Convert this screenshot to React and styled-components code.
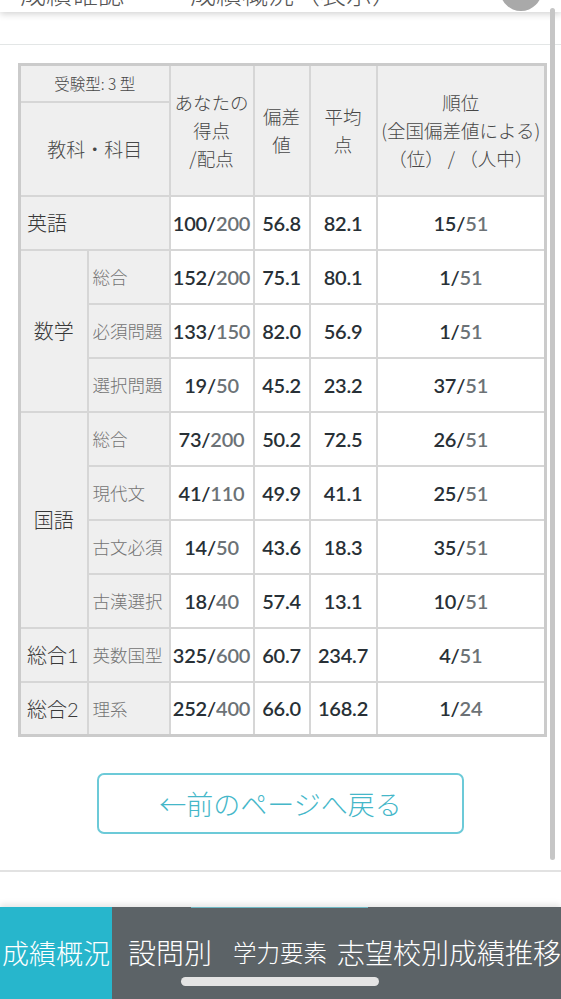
import React from "react";
import styled, { createGlobalStyle } from "styled-components";

const GlobalStyle = createGlobalStyle`
    html, body {
        margin: 0;
        padding: 0;
        background: #ffffff;
    }
    body {
        font-family: "Lato", "Noto Sans CJK JP", sans-serif;
        color: #333;
    }
    * {
        box-sizing: border-box;
    }
`;

const subjects = [
    { label: "英語", rows: [{ sub: null, score: 100, full: 200, dev: "56.8", avg: "82.1", rank: 15, total: 51 }] },
    {
        label: "数学",
        center: true,
        rows: [
            { sub: "総合", score: 152, full: 200, dev: "75.1", avg: "80.1", rank: 1, total: 51 },
            { sub: "必須問題", score: 133, full: 150, dev: "82.0", avg: "56.9", rank: 1, total: 51 },
            { sub: "選択問題", score: 19, full: 50, dev: "45.2", avg: "23.2", rank: 37, total: 51 },
        ],
    },
    {
        label: "国語",
        center: true,
        rows: [
            { sub: "総合", score: 73, full: 200, dev: "50.2", avg: "72.5", rank: 26, total: 51 },
            { sub: "現代文", score: 41, full: 110, dev: "49.9", avg: "41.1", rank: 25, total: 51 },
            { sub: "古文必須", score: 14, full: 50, dev: "43.6", avg: "18.3", rank: 35, total: 51 },
            { sub: "古漢選択", score: 18, full: 40, dev: "57.4", avg: "13.1", rank: 10, total: 51 },
        ],
    },
    { label: "総合1", rows: [{ sub: "英数国型", score: 325, full: 600, dev: "60.7", avg: "234.7", rank: 4, total: 51 }] },
    { label: "総合2", rows: [{ sub: "理系", score: 252, full: 400, dev: "66.0", avg: "168.2", rank: 1, total: 24 }] },
];

const tabs = [
    { label: "成績概況", w: 112, pad: 2, size: 27, active: true },
    { label: "設問別", w: 116, pad: 16, size: 28 },
    { label: "学力要素", w: 105, pad: 5, size: 23.5 },
    { label: "志望校別成績推移", w: 240, pad: 4, size: 28 },
];

const Fraction = ({ top, bottom }) => (
    <>
        {top}/<Denom>{bottom}</Denom>
    </>
);

const App = () => {
    return (
        <Page>
            <GlobalStyle />
            <TitleBar>
                成績確認　−　成績概況（表示）
                <InfoCircle />
            </TitleBar>
            <Content>
                <Divider />
                <TableWrap>
                    <Table>
                        <colgroup>
                            <col style={{ width: 68 }} />
                            <col style={{ width: 82 }} />
                            <col style={{ width: 84 }} />
                            <col style={{ width: 56 }} />
                            <col style={{ width: 67 }} />
                            <col style={{ width: 169 }} />
                        </colgroup>
                        <thead>
                            <tr style={{ height: 37 }}>
                                <Head colSpan={2} small>
                                    受験型: 3 型
                                </Head>
                                <Head rowSpan={2}>
                                    あなたの
                                    <br />
                                    得点
                                    <br /> /配点
                                </Head>
                                <Head rowSpan={2}>
                                    偏差
                                    <br />値
                                </Head>
                                <Head rowSpan={2}>
                                    平均
                                    <br />点
                                </Head>
                                <Head rowSpan={2}>
                                    順位
                                    <br />
                                    (全国偏差値による)
                                    <br />
                                    （位） / （人中）
                                </Head>
                            </tr>
                            <tr style={{ height: 94 }}>
                                <Head colSpan={2} wide>
                                    教科・科目
                                </Head>
                            </tr>
                        </thead>
                        <tbody>
                            {subjects.map((s) =>
                                s.rows.map((r, i) => (
                                    <Row key={s.label + i}>
                                        {i === 0 && (
                                            <Label
                                                rowSpan={s.rows.length}
                                                colSpan={r.sub ? 1 : 2}
                                                center={s.center}
                                            >
                                                {s.label}
                                            </Label>
                                        )}
                                        {r.sub && <SubLabel>{r.sub}</SubLabel>}
                                        <Num>
                                            <Fraction top={r.score} bottom={r.full} />
                                        </Num>
                                        <Num>{r.dev}</Num>
                                        <Num>{r.avg}</Num>
                                        <Num>
                                            <Fraction top={r.rank} bottom={r.total} />
                                        </Num>
                                    </Row>
                                ))
                            )}
                        </tbody>
                    </Table>
                </TableWrap>
                <BackButton>←前のページへ戻る</BackButton>
                <Divider thick />
            </Content>
            <TabBar>
                <TabIndicator />
                {tabs.map((t) => (
                    <Tab key={t.label} w={t.w} pad={t.pad} size={t.size} active={t.active}>
                        {t.label}
                    </Tab>
                ))}
                <ScrollPill />
            </TabBar>
            <ScrollBar />
        </Page>
    );
};

export default App;

const Page = styled.div`
    position: relative;
    width: 100%;
    height: 100vh;
    overflow: hidden;
    display: flex;
    flex-direction: column;
`;

const TitleBar = styled.div`
    position: relative;
    flex: none;
    height: 60px;
    margin-top: -48px;
    padding: 28px 0 0 20px;
    font-family: "Noto Sans CJK JP", sans-serif;
    font-weight: 300;
    font-size: 26px;
    line-height: 26px;
    color: #555;
    background: #fff;
    box-shadow: 0 2px 7px rgba(0, 0, 0, 0.18);
    z-index: 2;
    white-space: nowrap;
`;

const InfoCircle = styled.div`
    position: absolute;
    left: 500px;
    top: 17px;
    width: 42px;
    height: 42px;
    border-radius: 50%;
    background: #a9a9a9;

    ::after {
        content: "";
        position: absolute;
        left: 19px;
        bottom: 8px;
        width: 4px;
        height: 7px;
        border-radius: 2px;
        background: #f4f4f4;
    }
`;

const Content = styled.div`
    flex: 1;
    display: flex;
    flex-direction: column;
    align-items: stretch;
`;

const Divider = styled.div`
    height: ${({ thick }) => (thick ? "2px" : "1px")};
    background: ${({ thick }) => (thick ? "#e2e2e2" : "#e3e6e6")};
    margin-top: ${({ thick }) => (thick ? "36px" : "32px")};
`;

const TableWrap = styled.div`
    padding: 18px 15px 0 18px;
`;

const Table = styled.table`
    width: 526px;
    table-layout: fixed;
    border-collapse: collapse;
    border: 3px solid #cbcbcb;
    font-size: 20px;
`;

const Head = styled.th`
    background: #efefef;
    border: 2px solid #d6d6d6;
    font-family: "Noto Sans CJK JP", sans-serif;
    font-weight: 300;
    color: #474747;
    font-size: ${({ small, wide }) => (small ? "15.5px" : wide ? "19px" : "18.5px")};
    line-height: 28px;
    text-align: center;
    padding: 0;
    white-space: nowrap;
`;

const Row = styled.tr`
    height: 54px;
`;

const Label = styled.th`
    background: #efefef;
    border: 2px solid #d6d6d6;
    font-family: "Lato", "Noto Sans CJK JP", sans-serif;
    font-weight: 300;
    font-size: 20px;
    color: #383838;
    text-align: ${({ center }) => (center ? "center" : "left")};
    padding: 0 0 0 ${({ center }) => (center ? "0" : "6px")};
    white-space: nowrap;
`;

const SubLabel = styled.td`
    background: #efefef;
    border: 2px solid #d6d6d6;
    font-family: "Noto Sans CJK JP", sans-serif;
    font-weight: 300;
    font-size: 17.5px;
    color: #737373;
    padding: 0 0 0 4px;
    white-space: nowrap;
    overflow: hidden;
`;

const Num = styled.td`
    background: #fff;
    border: 2px solid #d6d6d6;
    font-family: "Lato", sans-serif;
    font-weight: 600;
    font-size: 20px;
    color: #283036;
    text-align: center;
    padding: 0;
    white-space: nowrap;
    letter-spacing: -0.2px;
`;

const Denom = styled.span`
    color: #6c7276;
`;

const BackButton = styled.div`
    align-self: center;
    margin-top: 36px;
    width: 367px;
    height: 61px;
    border: 2px solid #6ccad8;
    border-radius: 7px;
    display: flex;
    align-items: center;
    justify-content: center;
    font-family: "Noto Sans CJK JP", sans-serif;
    font-weight: 300;
    font-size: 27px;
    color: #45b7c9;
    cursor: pointer;
`;

const TabBar = styled.div`
    position: relative;
    flex: none;
    height: 92px;
    display: flex;
    background: #5c6367;
    box-shadow: 0 -3px 6px rgba(0, 0, 0, 0.1);
    overflow: hidden;
`;

const TabIndicator = styled.div`
    position: absolute;
    left: 191px;
    top: 0;
    width: 177px;
    height: 1px;
    background: #6fb8c4;
`;

const Tab = styled.div`
    flex: none;
    width: ${({ w }) => w}px;
    display: flex;
    align-items: center;
    padding: 0 0 2px ${({ pad }) => pad}px;
    background: ${({ active }) => (active ? "#27b6cc" : "transparent")};
    color: #ffffff;
    font-family: "Noto Sans CJK JP", sans-serif;
    font-weight: 300;
    font-size: ${({ size }) => size}px;
    white-space: nowrap;
`;

const ScrollPill = styled.div`
    position: absolute;
    left: 181px;
    top: 70px;
    width: 198px;
    height: 9px;
    border-radius: 5px;
    background: #e4e4e4;
`;

const ScrollBar = styled.div`
    position: absolute;
    right: 6px;
    top: 8px;
    width: 5px;
    height: 852px;
    border-radius: 3px;
    background: #c6c6c6;
    z-index: 3;
`;
